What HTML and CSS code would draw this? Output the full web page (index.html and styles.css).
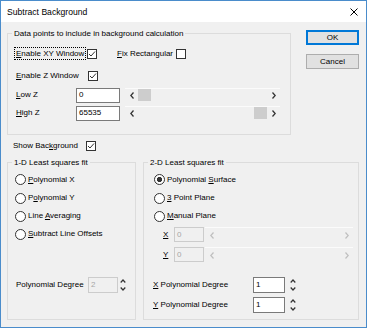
FILE: index.html
```html
<!DOCTYPE html>
<html lang="en">
<head>
  <meta charset="UTF-8">
  <title>Subtract Background</title>
  <link rel="stylesheet" href="styles.css">
</head>
<body>
  <div class="window">
    <div class="titlebar">
      <span class="title">Subtract Background</span>
      <svg class="close" width="8" height="8" viewBox="0 0 8 8"><path d="M0.5 0.5L7.5 7.5M7.5 0.5L0.5 7.5" stroke="#000" stroke-width="1" fill="none"/></svg>
    </div>

    <div class="content">
      <!-- Top: data points group + buttons -->
      <div class="top">
        <fieldset class="group group-points">
          <legend>Data points to include in background calculation</legend>

          <div class="row row-xy">
            <span class="label w-xy"><span class="focus"><u>E</u>nable XY Window</span></span>
            <span class="check"><svg width="8" height="8" viewBox="0 0 8 8"><path d="M1 4L3 6L7 1.5" stroke="#333" stroke-width="1" fill="none"/></svg></span>
            <span class="label fix"><u>F</u>ix Rectangular</span>
            <span class="check"></span>
          </div>

          <div class="row row-z">
            <span class="label w-z"><u>E</u>nable Z Window</span>
            <span class="check"><svg width="8" height="8" viewBox="0 0 8 8"><path d="M1 4L3 6L7 1.5" stroke="#333" stroke-width="1" fill="none"/></svg></span>
          </div>

          <div class="row row-low">
            <span class="label w-range"><u>L</u>ow Z</span>
            <span class="edit w-zval">0</span>
            <div class="scroll w-zscroll">
              <span class="arrow"><svg width="4" height="7" viewBox="0 0 4 7"><path d="M3.5 0.5L0.8 3.5L3.5 6.5" stroke="#333" stroke-width="1.3" fill="none"/></svg></span>
              <span class="track"><span class="thumb"></span></span>
              <span class="arrow"><svg width="4" height="7" viewBox="0 0 4 7"><path d="M0.5 0.5L3.2 3.5L0.5 6.5" stroke="#333" stroke-width="1.3" fill="none"/></svg></span>
            </div>
          </div>

          <div class="row row-high">
            <span class="label w-range"><u>H</u>igh Z</span>
            <span class="edit w-zval">65535</span>
            <div class="scroll w-zscroll">
              <span class="arrow"><svg width="4" height="7" viewBox="0 0 4 7"><path d="M3.5 0.5L0.8 3.5L3.5 6.5" stroke="#333" stroke-width="1.3" fill="none"/></svg></span>
              <span class="track end"><span class="thumb"></span></span>
              <span class="arrow"><svg width="4" height="7" viewBox="0 0 4 7"><path d="M0.5 0.5L3.2 3.5L0.5 6.5" stroke="#333" stroke-width="1.3" fill="none"/></svg></span>
            </div>
          </div>
        </fieldset>

        <div class="buttons">
          <button class="btn default">OK</button>
          <button class="btn">Cancel</button>
        </div>
      </div>

      <div class="row row-show">
        <span class="label w-show">Show Bac<u>k</u>ground</span>
        <span class="check"><svg width="8" height="8" viewBox="0 0 8 8"><path d="M1 4L3 6L7 1.5" stroke="#333" stroke-width="1" fill="none"/></svg></span>
      </div>

      <!-- Bottom: 1-D and 2-D fit groups -->
      <div class="bottom">
        <fieldset class="group group-1d">
          <legend>1-D Least squares fit</legend>
          <div class="row radio-row first"><span class="radio"></span><span><u>P</u>olynomial X</span></div>
          <div class="row radio-row"><span class="radio"></span><span>P<u>o</u>lynomial Y</span></div>
          <div class="row radio-row"><span class="radio"></span><span>Line <u>A</u>veraging</span></div>
          <div class="row radio-row"><span class="radio"></span><span><u>S</u>ubtract Line Offsets</span></div>

          <div class="row deg-row deg-1d">
            <span class="label w-deg1">Polynomial Degree</span>
            <span class="edit disabled w-deg">2</span>
            <svg class="spin" width="6" height="14" viewBox="0 0 6 14"><path d="M0.7 4.5L3 2L5.3 4.5M0.7 9.5L3 12L5.3 9.5" stroke="#333" stroke-width="1.2" fill="none"/></svg>
          </div>
        </fieldset>

        <fieldset class="group group-2d">
          <legend>2-D Least squares fit</legend>
          <div class="row radio-row first"><span class="radio on"></span><span>Polynomial <u>S</u>urface</span></div>
          <div class="row radio-row"><span class="radio"></span><span><u>3</u> Point Plane</span></div>
          <div class="row radio-row"><span class="radio"></span><span><u>M</u>anual Plane</span></div>

          <div class="row plane-row plane-x">
            <span class="label w-axis"><u>X</u></span>
            <span class="edit disabled w-plane">0</span>
            <div class="scroll disabled w-pscroll">
              <span class="arrow"><svg width="4" height="7" viewBox="0 0 4 7"><path d="M3.5 0.5L0.8 3.5L3.5 6.5" stroke="#bfbfbf" stroke-width="1.2" fill="none"/></svg></span>
              <span class="track"></span>
              <span class="arrow"><svg width="4" height="7" viewBox="0 0 4 7"><path d="M0.5 0.5L3.2 3.5L0.5 6.5" stroke="#bfbfbf" stroke-width="1.2" fill="none"/></svg></span>
            </div>
          </div>

          <div class="row plane-row plane-y">
            <span class="label w-axis"><u>Y</u></span>
            <span class="edit disabled w-plane">0</span>
            <div class="scroll disabled w-pscroll">
              <span class="arrow"><svg width="4" height="7" viewBox="0 0 4 7"><path d="M3.5 0.5L0.8 3.5L3.5 6.5" stroke="#bfbfbf" stroke-width="1.2" fill="none"/></svg></span>
              <span class="track"></span>
              <span class="arrow"><svg width="4" height="7" viewBox="0 0 4 7"><path d="M0.5 0.5L3.2 3.5L0.5 6.5" stroke="#bfbfbf" stroke-width="1.2" fill="none"/></svg></span>
            </div>
          </div>

          <div class="row deg-row deg-x">
            <span class="label w-deg2"><u>X</u> Polynomial Degree</span>
            <span class="edit w-deg2val">1</span>
            <svg class="spin" width="6" height="14" viewBox="0 0 6 14"><path d="M0.7 4.5L3 2L5.3 4.5M0.7 9.5L3 12L5.3 9.5" stroke="#333" stroke-width="1.2" fill="none"/></svg>
          </div>

          <div class="row deg-row deg-y">
            <span class="label w-deg2"><u>Y</u> Polynomial Degree</span>
            <span class="edit w-deg2val">1</span>
            <svg class="spin" width="6" height="14" viewBox="0 0 6 14"><path d="M0.7 4.5L3 2L5.3 4.5M0.7 9.5L3 12L5.3 9.5" stroke="#333" stroke-width="1.2" fill="none"/></svg>
          </div>
        </fieldset>
      </div>
    </div>
  </div>
</body>
</html>
```

FILE: styles.css
```css
/* Colours */
:root {
  --face: #f0f0f0;
  --frame: #4a8ccb;
  --group: #dcdcdc;
  --edit-border: #7a7a7a;
  --off: #a6a6a6;
}

* { margin: 0; padding: 0; box-sizing: border-box; }
body {
  background: #fff;
  font-family: 'Liberation Sans', Arial, sans-serif;
  font-size: 8px;
  line-height: 10px;
  color: #000;
}
u { text-decoration-thickness: 1px; text-underline-offset: 1px; }

/* Window frame */
.window {
  width: 367px;
  height: 328px;
  border: 1px solid var(--frame);
  background: var(--face);
  display: flex;
  flex-direction: column;
}
.titlebar {
  height: 21px;
  flex: none;
  background: #fff;
  display: flex;
  align-items: center;
  justify-content: space-between;
  padding: 0 8px 0 6px;
}
.title { font-size: 8.6px; }
.close { margin-top: 1px; }

.content { padding: 6px 7px 0 6px; }

/* Group boxes */
.group {
  border: 1px solid var(--group);
  padding: 0;
  min-width: 0;
}
.group legend {
  margin-left: 4px;
  padding: 0 2px;
  line-height: 11px;
}

.row { display: flex; align-items: center; }
.label { flex: none; }

/* Top area */
.top { display: flex; gap: 15px; }
.group-points { width: 284px; height: 107px; }
.row-xy { margin-top: 4px; height: 22px; padding-left: 8px; }
.row-z { height: 22px; padding-left: 8px; }
.row-low { height: 16px; padding-left: 8px; }
.row-high { height: 20px; padding-left: 8px; }

.w-xy { width: 71px; }
.focus { outline: 1px dotted #000; outline-offset: 1px; }
.fix { margin-left: 20px; width: 59px; }
.w-z { width: 72px; }
.w-range { width: 60px; }
.w-zval { width: 44px; }
.w-zscroll { width: 155px; margin-left: 5px; }

.buttons {
  width: 53px;
  margin-top: 2px;
  display: flex;
  flex-direction: column;
  gap: 9px;
}
.btn {
  height: 15px;
  font: inherit;
  color: #000;
  background: #e1e1e1;
  border: 1px solid #adadad;
}
.btn.default { border-color: #0078d7; box-shadow: inset 0 0 0 1px #0078d7; }

/* Controls */
.check {
  width: 10px;
  height: 10px;
  flex: none;
  border: 1px solid #333;
  background: #fff;
  display: flex;
  align-items: center;
  justify-content: center;
}
.radio {
  width: 11px;
  height: 11px;
  flex: none;
  border: 1px solid #333;
  border-radius: 50%;
  background: #fff;
  margin-right: 2px;
}
.radio.on { background: radial-gradient(circle, #333 0, #333 2.4px, #fff 2.9px); }

.edit {
  flex: none;
  height: 15px;
  border: 1px solid var(--edit-border);
  background: #fff;
  padding-left: 2px;
  display: flex;
  align-items: center;
}
.edit.disabled { border-color: #cccccc; background: var(--face); color: var(--off); }

.scroll {
  flex: none;
  height: 14px;
  border-top: 1px solid #fbfbfb;
  display: flex;
}
.scroll .arrow {
  width: 13px;
  display: flex;
  align-items: center;
  justify-content: center;
}
.scroll .track { flex: 1; display: flex; align-items: center; }
.scroll .track.end { justify-content: flex-end; }
.thumb { width: 13px; height: 12px; background: #cdcdcd; margin-top: -1px; }

.spin { flex: none; }

/* Show background */
.row-show { margin-top: 4px; height: 14px; padding-left: 6px; }
.w-show { width: 73px; }

/* Bottom groups */
.bottom { display: flex; gap: 7px; margin-top: 4px; }
.group-1d { width: 129px; height: 163px; }
.group-2d { width: 216px; height: 163px; }

.radio-row { height: 18px; }
.radio-row.first { margin-top: 2px; height: 19px; }
.group-1d .radio-row { padding-left: 7px; }
.group-2d .radio-row { padding-left: 10px; }

.deg-row { height: 16px; }
.deg-row .edit { height: 16px; }
.deg-1d { margin-top: 34px; padding-left: 8px; }
.w-deg1 { width: 72px; }
.w-deg { width: 30px; }
.deg-1d .spin { margin-left: 2px; }

.plane-row { height: 15px; padding-left: 19px; }
.plane-x { margin-top: 2px; }
.plane-y { margin-top: 5px; }
.w-axis { width: 11px; }
.w-plane { width: 30px; }
.w-pscroll { width: 148px; height: 15px; margin-left: 1px; }

.deg-x { margin-top: 15px; padding-left: 9px; }
.deg-y { margin-top: 4px; padding-left: 9px; }
.w-deg2 { width: 100px; }
.w-deg2val { width: 32px; }
.deg-x .spin, .deg-y .spin { margin-left: 5px; }
```
